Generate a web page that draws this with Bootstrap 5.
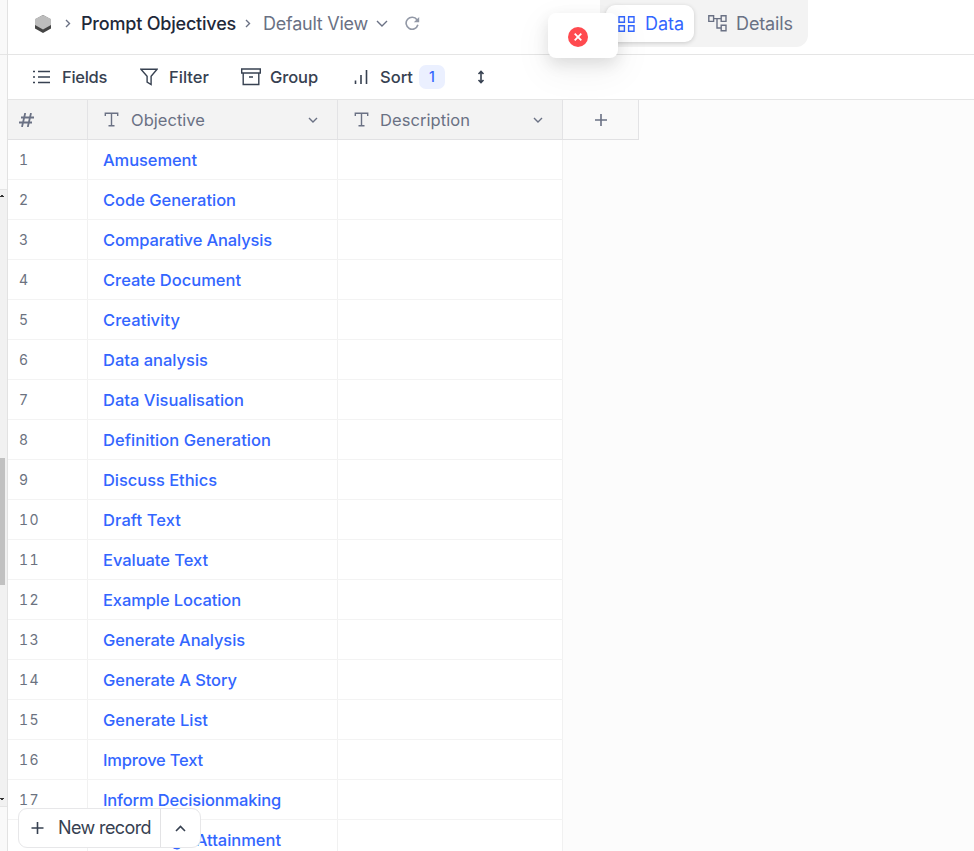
<!DOCTYPE html>
<html lang="en">
<head>
<meta charset="utf-8">
<meta name="viewport" content="width=device-width, initial-scale=1">
<title>Prompt Objectives</title>
<link href="https://cdn.jsdelivr.net/npm/bootstrap@5.3.0/dist/css/bootstrap.min.css" rel="stylesheet">
<style>
body{font-family:Inter,"Open Sans",sans-serif;font-size:16px;line-height:24px;color:#374151;background:#fcfcfc}
svg{display:block;flex:none;fill:none;stroke:currentColor;stroke-width:1.4}
.app{width:974px;height:851px}
.rail{width:8px;background:#f9f9f9;border-right:1px solid #e2e2e2}
.rail-top{height:55px;border-bottom:1px solid #e5e5e5}
.rail-mid{height:134px}
.rail-scroll{height:618px;background:#f1f1f1;border-top:1px solid #e5e5e5;border-bottom:1px solid #e5e5e5;padding-top:5px}
.rail-thumb{width:5px;height:127px;background:#c1c1c1;margin-top:260px}
.rail-arrow{margin-top:213px}
.topbar{height:55px;border-bottom:1px solid #e5e5e5;background:#fff;padding-left:26px}
.topbar .crumbs{height:47px}
.fit{white-space:nowrap;display:inline-block}
.title{font-size:18px;font-weight:480;color:#1f293a}
.view{font-size:18px;color:#6a7184}
.muted{color:#6a7184}
.tabs{width:208px;height:58px;margin:-11px 166px 0 0;background:#f3f3f3;border-radius:12px;padding:16px 6px 5px}
.tab-on{width:88px;height:37px;background:#fff;border-radius:9px;color:#3366ff;padding-left:12px;box-shadow:0 1px 4px #0000002b;font-size:18px}
.tab-off{padding-left:14px;color:#6a7184;font-size:18px}
.toolbar{height:45px;border-bottom:1px solid #e5e5e5;background:#fff}
.tool{font-size:16.5px;font-weight:450}
.sort-count{width:26px;height:24px;border-radius:7px;background:#ebf0ff;color:#3366ff;font-size:14px}
.hd{width:631px;height:40px;border-bottom:1px solid #e1e1e3;color:#6a7184;font-size:16.5px}
.hd>div{background:#f3f3f3;border-right:1px solid #e3e3e5}
.hd>.add{width:76px;background:#f9f9f9}
.c1{width:80px;padding-left:11px}.c2{width:250px;padding-left:15px}.c3{width:225px;padding-left:15px}
.line{height:40px;width:555px;border-bottom:1px solid #f3f3f3;background:#fff}
.line>div{border-right:1px solid #f1f1f1;height:100%}
.num{font-size:14px;letter-spacing:1.3px;color:#6b7280;font-feature-settings:"tnum"}
.name{color:#3366ff;font-weight:480;font-size:16.5px}
.grid-body{height:711px}
.toast-box{left:548px;top:13px;width:70px;height:45px;border-radius:8px;background:#fff;box-shadow:0 6px 16px #0000001c,0 12px 34px 6px #0000000b;padding:2px 0 0 20px}
.new-box{left:18px;top:808px;width:183px;height:40px;background:#fff;border:1px solid #e7e7e9;border-radius:9px;font-size:18px}
.new-main{width:142px;height:100%;border-right:1px solid #e3e3e5;padding-left:12px}
</style>
<script src="https://cdn.jsdelivr.net/npm/bootstrap@5.3.0/dist/js/bootstrap.bundle.min.js"></script>
</head>
<body>
<div class="app d-flex overflow-hidden position-relative">
  <aside class="rail flex-shrink-0">
    <div class="rail-top"></div><div class="rail-mid"></div>
    <div class="rail-scroll">
      <svg width="5" height="3" viewBox="0 0 5 3"><path d="M1 .5h2M0 1.5h4" stroke="#333" stroke-width="1"/></svg>
      <div class="rail-thumb"></div>
      <svg class="rail-arrow" width="5" height="3" viewBox="0 0 5 3"><path d="M0 .5h4M1 1.5h2" stroke="#333" stroke-width="1"/></svg>
    </div>
  </aside>
  <main class="flex-grow-1">
    <header class="topbar d-flex justify-content-between">
      <div class="crumbs d-flex align-items-center">
        <svg width="18" height="18" viewBox="0 0 18 18"><path d="M1 4.500 9 0l8 4.500v9L9 18l-8-4.500z" fill="#444" stroke="none"/><path d="M1 4 9 0l8 4v6l-8 4.500L1 10z" fill="#bdbdbd" stroke="none"/></svg>
        <svg class="muted" width="6" height="9" viewBox="0 0 6 9" style="margin-left:13px"><path d="m1 1 3.500 3.500L1 8"/></svg>
        <span class="fit title" data-w="155" style="margin-left:10px">Prompt Objectives</span>
        <svg class="muted" width="6" height="9" viewBox="0 0 6 9" style="margin-left:9px"><path d="m1 1 3.500 3.500L1 8"/></svg>
        <span class="fit view" data-w="105" style="margin-left:12px">Default View</span>
        <svg class="muted" width="12" height="7" viewBox="0 0 12 7" style="margin-left:8px"><path d="m1 1 5 5 5-5"/></svg>
        <svg width="15" height="15" viewBox="0 0 15 15" style="margin-left:17px;color:#9298a6"><path d="M12.900 8.800A6 6 0 1 1 12 3.700" stroke-width="1.600"/><path d="M8.800 6.300h5.400V1z" fill="currentColor" stroke="none"/></svg>
      </div>
      <nav class="tabs d-flex align-items-center flex-shrink-0">
        <div class="tab-on d-flex align-items-center"><svg width="17" height="16" viewBox="0 0 17 16"><path d="M1 .8h5.400v5.400H1zM10.600.8H16v5.400h-5.400zM1 9.800h5.400v5.400H1zM10.600 9.800H16v5.400h-5.400z"/></svg><span class="fit" data-w="39" style="margin-left:10px">Data</span></div>
        <div class="tab-off d-flex align-items-center"><svg width="19" height="17" viewBox="0 0 19 17"><path d="M.8.8h4.800v5.600H.8zM13.200.8H18v5.600h-4.800zM13.200 10.200H18v5.600h-4.800zM5.600 3.600h7.600M9 3.600v9.400h4.200"/></svg><span class="fit" data-w="57" style="margin-left:9px">Details</span></div>
      </nav>
    </header>
    <div class="toolbar tool d-flex align-items-center">
      <svg width="18" height="14" viewBox="0 0 18 14" style="margin-left:25px"><path d="M5 1.500h12M5 7h12M5 12.500h12M0 1.500h2M0 7h2M0 12.500h2"/></svg><span class="fit" data-w="45" style="margin-left:11px">Fields</span>
      <svg width="18" height="18" viewBox="0 0 18 18" style="margin-left:33px"><path d="M.9 1.300h16.200l-6 7v8.200l-4-2.500V8.300z"/></svg><span class="fit" data-w="40" style="margin-left:11px">Filter</span>
      <svg width="20" height="18" viewBox="0 0 20 18" style="margin-left:32px"><path d="M.7 1h18.600v4H.7zM2.200 5v11.500h15.600V5M8 9h4"/></svg><span class="fit" data-w="48" style="margin-left:9px">Group</span>
      <svg width="14" height="16" viewBox="0 0 14 16" style="margin-left:36px"><path d="M1.500 11.500V15M7 6v9M12.500 1v14" stroke-width="1.600"/></svg><span class="fit" data-w="33" style="margin-left:12px">Sort</span>
      <span class="sort-count d-flex align-items-center justify-content-center" style="margin-left:6px">1</span>
      <svg width="8" height="14" viewBox="0 0 8 14" style="margin-left:32px"><path d="M4 1v12M1.500 4 4 1.500 6.500 4M1.500 10 4 12.500 6.500 10" stroke-width="1.600"/></svg>
    </div>
    <div class="hd d-flex">
      <div class="c1 d-flex align-items-center"><svg width="15" height="14" viewBox="0 0 15 14"><path d="M2 4.500h13M0 9.500h13M6.200 0 3 14M12 0 8.800 14" stroke-width="1.800"/></svg></div>
      <div class="c2 d-flex align-items-center"><svg width="17" height="15" viewBox="0 0 17 15"><path d="M2.300 4V1.300h12.400V4M8.500 1.300v12.400M5.500 13.700h6"/></svg><span class="fit" data-w="74" style="margin-left:11px">Objective</span><svg class="ms-auto" width="10" height="6" viewBox="0 0 10 6" style="margin-right:19px"><path d="m1 1 4 4 4-4"/></svg></div>
      <div class="c3 d-flex align-items-center"><svg width="17" height="15" viewBox="0 0 17 15"><path d="M2.300 4V1.300h12.400V4M8.500 1.300v12.400M5.500 13.700h6"/></svg><span class="fit" data-w="90" style="margin-left:10px">Description</span><svg class="ms-auto" width="10" height="6" viewBox="0 0 10 6" style="margin-right:19px"><path d="m1 1 4 4 4-4"/></svg></div>
      <div class="add d-flex align-items-center justify-content-center"><svg width="12" height="12" viewBox="0 0 12 12"><path d="M6 0v12M0 6h12" stroke-width="1.600"/></svg></div>
    </div>
    <div class="grid-body" id="rows"></div>
  </main>
  <div class="toast-box position-absolute d-flex align-items-center"><svg width="20" height="20" viewBox="0 0 20 20"><circle cx="10" cy="10" r="10" fill="#ff4a4f" stroke="none"/><path d="m6.700 6.700 6.600 6.600m0-6.600-6.600 6.600" stroke="#fff" stroke-width="1.800"/></svg></div>
  <div class="new-box position-absolute d-flex align-items-center">
    <div class="new-main d-flex align-items-center"><svg width="13" height="12" viewBox="0 0 13 12"><path d="M6.500 0v12M.5 6h12" stroke-width="1.600"/></svg><span class="fit" data-w="93" style="margin-left:14px">New record</span></div>
    <svg width="11" height="7" viewBox="0 0 11 7" style="margin-left:14px"><path d="m1 6 4.500-4.500L10 6" stroke-width="1.600"/></svg>
  </div>
</div>
<script>
const records=[["Amusement",94],["Code Generation",133],["Comparative Analysis",169],["Create Document",138],["Creativity",77],["Data analysis",105],["Data Visualisation",141],["Definition Generation",168],["Discuss Ethics",114],["Draft Text",78],["Evaluate Text",105],["Example Location",138],["Generate Analysis",142],["Generate A Story",134],["Generate List",105],["Improve Text",100],["Inform Decisionmaking",178],["Knowledge Attainment",178]];
document.getElementById("rows").innerHTML=records.map(([n,w],i)=>`<div class="line d-flex"><div class="c1 d-flex align-items-center num">${i<17?i+1:""}</div><div class="c2 d-flex align-items-center"><span class="fit name" data-w="${w}">${n}</span></div><div class="c3"></div></div>`).join("");
// Track each label so that it fills its width evenly
document.querySelectorAll(".fit").forEach(e=>{
  const w=+e.dataset.w, n=e.textContent.length;
  e.style.letterSpacing=(w-e.getBoundingClientRect().width)/n+"px";
});
</script>
</body>
</html>
